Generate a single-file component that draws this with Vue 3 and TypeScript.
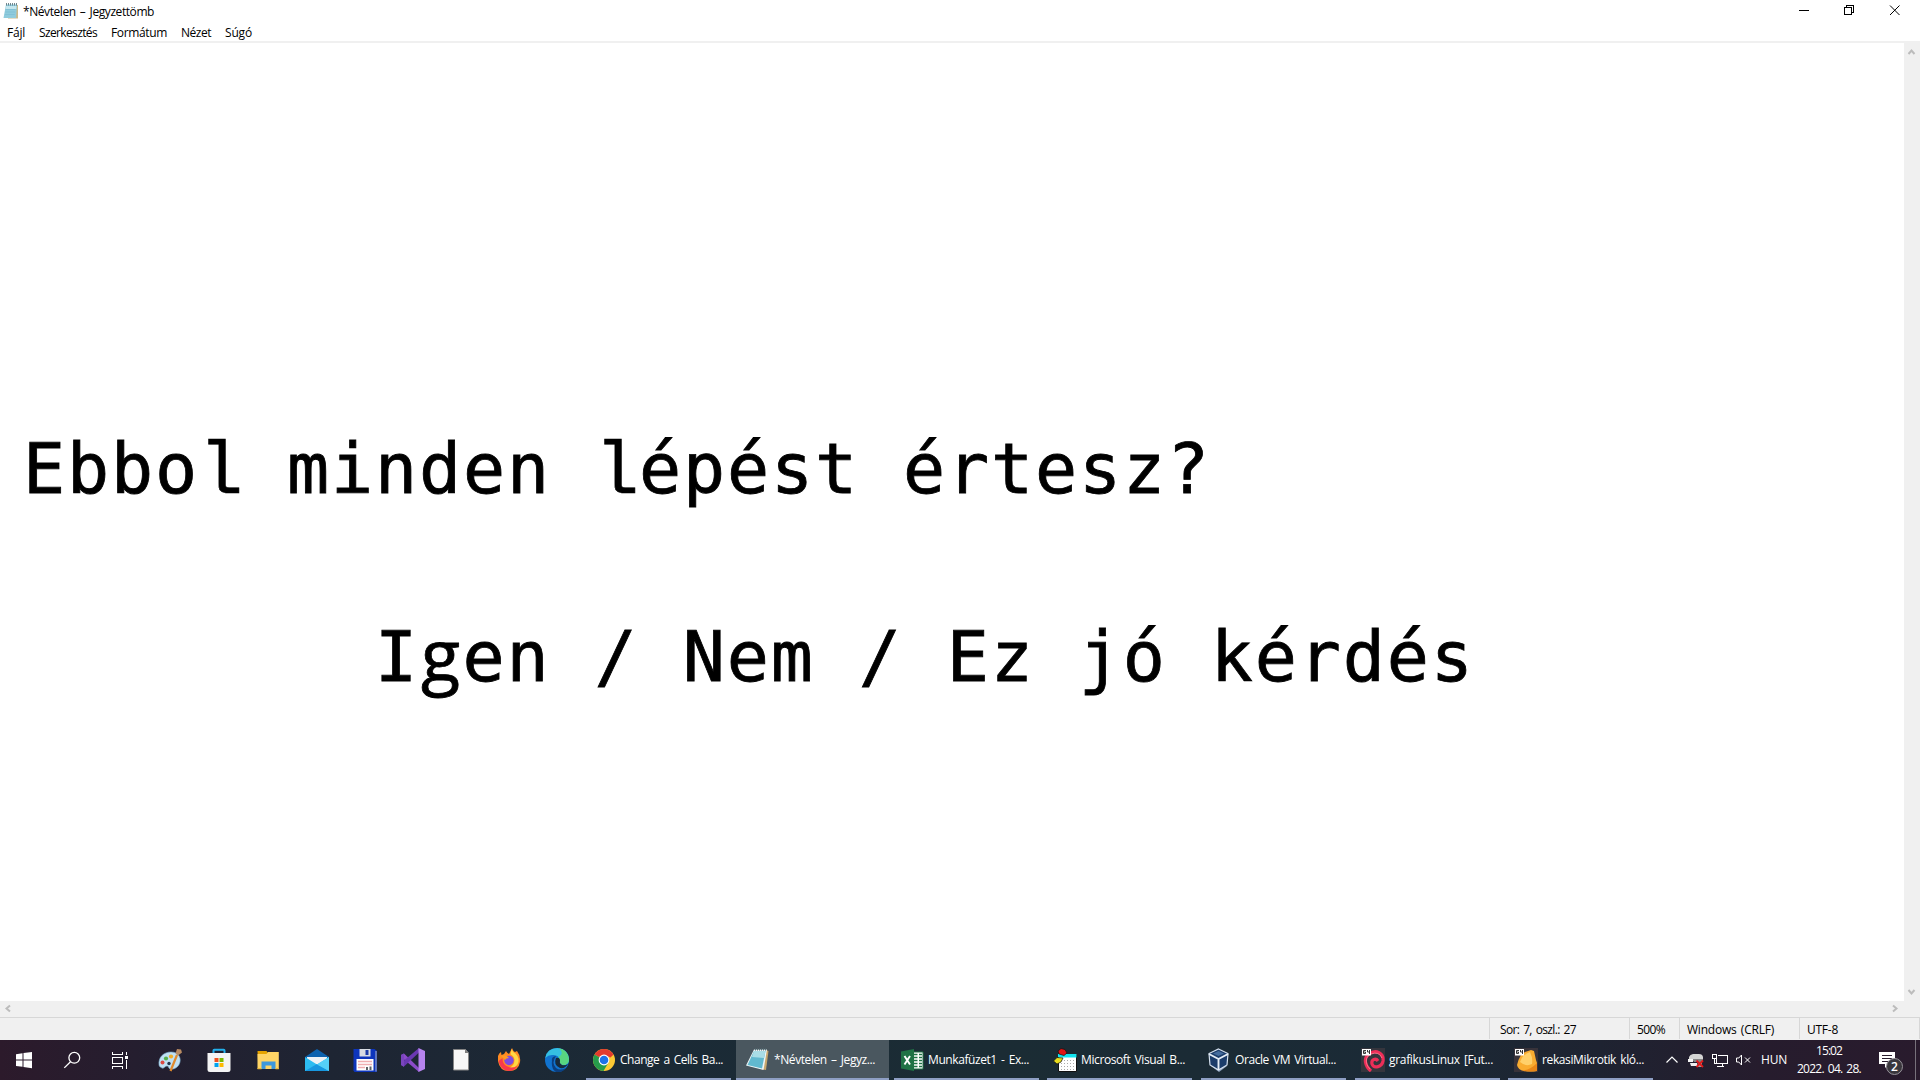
<script setup lang="ts">
interface Fitted {
  text: string
  width: number
}

interface Task extends Fitted {
  icon: string
  active?: boolean
}

const menu: Fitted[] = [
  { text: 'Fájl', width: 18 },
  { text: 'Szerkesztés', width: 58 },
  { text: 'Formátum', width: 56 },
  { text: 'Nézet', width: 30 },
  { text: 'Súgó', width: 27 },
]

const pinned = ['paint', 'store', 'explorer', 'mail', 'floppy', 'vs', 'file', 'firefox', 'edge']

const tasks: Task[] = [
  { icon: 'chrome', text: 'Change a Cells Ba...', width: 103 },
  { icon: 'notepad', text: '*Névtelen – Jegyz...', width: 101, active: true },
  { icon: 'excel', text: 'Munkafüzet1 - Ex...', width: 101 },
  { icon: 'vba', text: 'Microsoft Visual B...', width: 104 },
  { icon: 'vbox', text: 'Oracle VM Virtual...', width: 101 },
  { icon: 'debian', text: 'grafikusLinux [Fut...', width: 104 },
  { icon: 'mikrotik', text: 'rekasiMikrotik kló...', width: 102 },
]

/* Spreads the letters of a label so that it takes the given width. */
const vFit = {
  mounted(el: HTMLElement, binding: { value: number }) {
    const natural = el.getBoundingClientRect().width
    const count = (el.textContent ?? '').length
    el.style.letterSpacing = `${(binding.value - natural) / count}px`
  },
}
</script>

<template>
  <div class="screen">
    <header class="title-bar">
      <svg class="app-icon" width="16" height="17" viewBox="0 0 16 17">
        <path d="M4 2h11v13.500H5z" fill="#c9b98c" />
        <path d="M3 1.500h11L13 15H.5z" fill="#8fcbdc" />
        <path d="M3 3h10.500l-.3 3H2.500z" fill="#c4e6ee" />
        <path d="M2.500 6.500h10M2.200 9h10M1.800 11.500h10" stroke="#7dbdd2" stroke-width=".7" />
        <path d="M3.500 0v2.500M5.500 0v2.500M7.500 0v2.500M9.500 0v2.500M11.500 0v2.500M13.500 0v2.500" stroke="#526b74" stroke-width=".8" />
      </svg>
      <span class="title"><span v-fit="131">*Névtelen – Jegyzettömb</span></span>
      <svg class="win-buttons" width="138" height="20" viewBox="0 0 138 20" fill="none" stroke="#000" shape-rendering="crispEdges">
        <path d="M17 10.500h10" />
        <path d="M62.500 7.500h7v7h-7zM64.500 7.500v-2h7v7h-2" />
        <path d="M108 5.500l9.500 9.500M117.500 5.500l-9.500 9.500" shape-rendering="auto" />
      </svg>
    </header>
    <nav class="menu">
      <span v-for="m in menu" :key="m.text" class="menu-item" :style="{ width: m.width + 'px' }"><span v-fit="m.width">{{ m.text }}</span></span>
    </nav>

    <main class="editor">
      <div class="page">
        <p class="line first">Ebbo<span class="ell">l</span> minden <span class="ell">l</span>épést értesz?</p>
        <p class="line second">I<span class="gee">g</span>en / Nem / Ez jó kérdés</p>
      </div>
      <div class="v-scroll">
        <svg width="16" height="16" viewBox="0 0 16 16"><path d="M4.500 11l3-3.500 3 3.500" /></svg>
        <svg width="16" height="16" viewBox="0 0 16 16"><path d="M4.500 5l3 3.500 3-3.500" /></svg>
      </div>
    </main>
    <div class="h-scroll">
      <svg width="16" height="16" viewBox="0 0 16 16"><path d="M10 4.500l-3.500 3 3.500 3" /></svg>
      <svg width="16" height="16" viewBox="0 0 16 16"><path d="M6 4.500l3.500 3-3.500 3" /></svg>
    </div>

    <footer class="status">
      <div class="cell pos"><span v-fit="76">Sor: 7, oszl.: 27</span></div>
      <div class="cell zoom"><span v-fit="28">500%</span></div>
      <div class="cell eol"><span v-fit="87">Windows (CRLF)</span></div>
      <div class="cell enc"><span v-fit="31">UTF-8</span></div>
    </footer>

    <div class="taskbar">
      <div class="system">
        <svg width="48" height="40" viewBox="0 0 48 40" fill="#fff">
          <path d="M16 14.200l6.500-.9v6.200H16zM23.500 13.100l8.500-1.200v7.600h-8.500zM16 20.500h6.500v6.300l-6.500-.9zM23.500 20.500H32v7.700l-8.500-1.200z" />
        </svg>
        <svg width="48" height="40" viewBox="0 0 48 40" fill="none" stroke="#fff" stroke-width="1.300">
          <circle cx="26.300" cy="17.800" r="5.400" />
          <path d="M22.500 21.700l-6.200 6.200" />
        </svg>
        <svg width="48" height="40" viewBox="0 0 48 40" fill="none" stroke="#fff" shape-rendering="crispEdges">
          <path d="M16.500 12v2.500h10V12M16.500 17.500h10v6h-10zM16.500 28.500v-2.500h10v2.500M30.500 12v3M30.500 20v8.500" />
          <path d="M29 16h3v3h-3z" fill="#fff" stroke="none" />
        </svg>
      </div>

      <div class="pinned">
        <div v-for="p in pinned" :key="p" class="pin">
          <svg width="24" height="24" viewBox="0 0 24 24">
            <template v-if="p === 'paint'">
              <path d="M1 17C0 9 6 4 13 4c7 0 10 5 9 10s-6 8-10 7c-2-1-1-3-3-3s-3 3-5 2-2.700-1.500-3-3z" fill="#bfe0f3" stroke="#79a9ca" stroke-width=".6" />
              <circle cx="4.500" cy="14.500" r="2" fill="#dc4943" />
              <circle cx="8" cy="10.500" r="2.100" fill="#55b14d" />
              <circle cx="13" cy="8.500" r="2.100" fill="#f0ad28" />
              <circle cx="11" cy="15.500" r="1.700" fill="#23354b" />
              <path d="M19 7l-6.500 16" stroke="#e08a2d" stroke-width="2.200" />
              <path d="M17.500 5.500L20 7.500l4-3-1-3-4-.5z" fill="#b98b62" />
            </template>
            <template v-else-if="p === 'store'">
              <path d="M6.500 6V2.500q0-.8.8-.8h9.400q.8 0 .8.8V6" fill="none" stroke="#23b0ec" stroke-width="2" />
              <path d="M.5 5h23v16.500q0 2.500-2.500 2.500H3Q.5 24 .5 21.500z" fill="#f4f4f4" />
              <path d="M7.500 10h4v4h-4z" fill="#f0511f" />
              <path d="M12.500 10h4v4h-4z" fill="#7cba00" />
              <path d="M7.500 15h4v4h-4z" fill="#00a3ee" />
              <path d="M12.500 15h4v4h-4z" fill="#fdb900" />
            </template>
            <template v-else-if="p === 'explorer'">
              <path d="M1.500 3h9l1.500 2h10v8h-20z" fill="#e6a400" />
              <path d="M1.500 6h9l1.500-2h10.800v17H1.500z" fill="#ffd566" />
              <path d="M5.500 21v-7.500h14V21h-4v-3.500h-6V21z" fill="#3d98dc" />
              <path d="M1.500 20h4v1.200h-4zM19.500 20h3.300v1.200h-3.300z" fill="#e9b73e" />
            </template>
            <template v-else-if="p === 'mail'">
              <path d="M0 9l12-8 12 8v5H0z" fill="#0d62ae" />
              <path d="M2 9h20v6l-10 3L2 15z" fill="#eef2f5" />
              <path d="M0 9l12 7.500L24 9v14H0z" fill="#2cbcf1" />
              <path d="M0 23l12-7 12 7z" fill="#1797e0" />
              <path d="M24 9v14L12 16.500z" fill="#55d0f7" />
            </template>
            <template v-else-if="p === 'floppy'">
              <path d="M.5 1h21L24 3v21H1.500L.5 22.500z" fill="#0d35bb" />
              <path d="M23 3v20.500" stroke="#b0b5bd" />
              <path d="M6.500 1h11v7.500h-11z" fill="#d7dbe2" />
              <path d="M12.500 2h3v5h-3z" fill="#1a3ca8" />
              <path d="M3.500 11h17v11.500h-17z" fill="#fff" />
              <path d="M5 13.500h14M5 16.500h14M5 19.500h7" stroke="#efadb0" stroke-width="1.300" />
              <path d="M13 19h2v3h-2zM16.500 18.500h2v3.500h-2z" fill="#5b6065" />
            </template>
            <template v-else-if="p === 'vs'">
              <path d="M0 7l3-1.500L18 20v4L0 9z" fill="#8c4bc9" />
              <path d="M0 17l3 1.500L18 4.500V0L0 15z" fill="#6a38b2" />
              <path d="M0 7l3-1.500V19L0 17z" fill="#7a45bd" />
              <path d="M17.500 0L24 3v18l-6.500 3z" fill="#b683ee" />
            </template>
            <template v-else-if="p === 'file'">
              <path d="M4.500 1.500h12l3 3.500v17h-15z" fill="#f7f7f7" stroke="#858585" />
              <path d="M16 1.500V5h3.500z" fill="#7c7c7c" />
            </template>
            <template v-else-if="p === 'firefox'">
              <path d="M1 8q1-3 3-4l.5 3L7 6l2-3q1 2 3 3l3-6q1 3 3 4l2-1q4 5 3 11-1.500 9-11 9T1 13z" fill="#ff8a21" />
              <path d="M14.500 1q1 3 4 4.500 5 5 2 11-4 5-9 3 6-1 6-8-1-4-4-5z" fill="#ffd843" />
              <path d="M1.500 13q2 9 10 10 6 0 9-5-6 3-11 0-4-2-4-8z" fill="#f9394b" />
              <circle cx="12" cy="12.500" r="4.700" fill="#7d4be0" />
              <path d="M4 8q5-2 8 2-3 0-4 2-2-3-4-4z" fill="#ff9b23" />
            </template>
            <template v-else>
              <circle cx="12" cy="12" r="12" fill="#1173cf" />
              <path d="M.3 10Q2 0 12.500 0 23 1 24 11q0 6-6 6-4-1-3-4-1-7-8-6Q3 7 .3 10z" fill="#35bfe2" />
              <path d="M14 .2Q23 2 24 11q0 6-6 6-4-1-3-4 0-2-1.500-4Q20 6 14 .2z" fill="#58d580" />
              <path d="M7 13q-1-4 4-5-5 7 0 12 4 3 10 0-4 5-10 4-5-3-4-11z" fill="#0b3f80" />
              <path d="M11 10q4-1 4 3-1 2 2 4 3 1 6-1-3 5-8 4-7-3-4-10z" fill="#182b3c" />
            </template>
          </svg>
        </div>
      </div>

      <div class="tasks">
        <div v-for="t in tasks" :key="t.icon" class="task" :class="{ active: t.active }">
          <svg width="24" height="24" viewBox="0 0 24 24">
            <template v-if="t.icon === 'chrome'">
              <circle cx="12" cy="12" r="11" fill="#fcc934" />
              <path d="M12 12L2.500 6.500A11 11 0 0 1 21.500 6.500z" fill="#e23b2e" />
              <path d="M12 12L2.500 6.500A11 11 0 0 0 11.500 23l5-8.500z" fill="#269c4b" />
              <path d="M12 6.500h9.500l-3 3z" fill="#e23b2e" />
              <circle cx="12" cy="12" r="5.400" fill="#fff" />
              <circle cx="12" cy="12" r="4.300" fill="#1d72e8" />
            </template>
            <template v-else-if="t.icon === 'notepad'">
              <path d="M20 2l2.500 1-2.500 19-5-1z" fill="#c8a76d" />
              <path d="M8 1.500h13L17.500 22 0 17.500z" fill="#eef6f7" />
              <path d="M8 3h11.500L16 20.500 1.500 17z" fill="#61b9cf" />
              <path d="M8 3h11.500l-1.500 7-12-1z" fill="#a9dde6" />
              <path d="M9 1.500h12" stroke="#526d74" stroke-dasharray="1 1" stroke-width="2" />
            </template>
            <template v-else-if="t.icon === 'excel'">
              <path d="M13 4h10v17H13z" fill="#fff" stroke="#207245" />
              <path d="M14 6.500h3.500M19 6.500h3M14 9.500h3.500M19 9.500h3M14 12.500h3.500M19 12.500h3M14 15.500h3.500M19 15.500h3M14 18.500h3.500M19 18.500h3" stroke="#207245" stroke-width="1.700" />
              <path d="M1 3.500L14 1v22L1 20.500z" fill="#207245" />
              <path d="M4.500 8l5.500 8.500M10 8l-5.500 8.500" stroke="#fff" stroke-width="1.900" />
            </template>
            <template v-else-if="t.icon === 'vba'">
              <path d="M5.500 6.500h18v17h-18z" fill="#fff" stroke="#111" />
              <path d="M5 6h18.500v3.500H5z" fill="#12e4ef" />
              <path d="M8 12.500h14M8 15.500h14M8 18.500h14M8 21.500h14" stroke="#aaa" stroke-dasharray="1 2" />
              <path d="M5 3l3-2.500 4 1L14 5l-3 2.500L6 6z" fill="#e01414" stroke="#111" stroke-width=".7" />
              <path d="M.5 13L4 9.500l6 .5-2 4-4 2z" fill="#e7db1d" stroke="#111" stroke-width=".7" />
            </template>
            <template v-else-if="t.icon === 'vbox'">
              <path d="M4 18l8 6 8-6z" fill="#8da3be" />
              <path d="M11.500 1L21 5.500 20 17l-8.500 5L3 17 2 5.500z" fill="#1b3c6a" stroke="#d5e0ee" stroke-width="1.200" />
              <path d="M2 6l9.500 5L21 6M11.500 11v11" fill="none" stroke="#e4edf7" stroke-width="1.900" />
              <path d="M6 5.500l5.500-2.500L17 5.500 11.500 8z" fill="#446c9d" />
            </template>
            <template v-else-if="t.icon === 'debian'">
              <path d="M0 0h24v24H0z" fill="#35353d" />
              <path d="M10 23C4 18 2 10 8 6c7-5 15-1 14 7-1 6-9 8-11 3-1-5 4-6 6-3" fill="none" stroke="#ed2e58" stroke-width="3.200" />
              <path d="M9 21C3 15 5 8 10 6q8-3 11 4" fill="none" stroke="#ff8297" stroke-width=".8" />
            </template>
            <template v-else>
              <path d="M0 0h24v24H0z" fill="#38333a" />
              <path d="M3 17q1-5 4-10l4-3 6-2 3 1 2 9 1 3v8q-6 1-13 0-6-1-7-6z" fill="#f9ac30" />
              <path d="M6 14q3-8 10-10 3 6 2 12-6 3-12-2z" fill="#ffd06a" />
              <path d="M7 22.500q9 0 16-7.500v8q-8 1-16-.5z" fill="#e98717" />
            </template>
            <g v-if="t.icon === 'debian' || t.icon === 'mikrotik'">
              <path d="M1 1h9v6.500H1z" fill="#fff" />
              <path d="M5 2.500H2.500v3h2V4h-2M6.500 2v2h2.500M8.500 2v4" fill="none" stroke="#222" stroke-width=".9" />
            </g>
          </svg>
          <span class="task-label"><span v-fit="t.width">{{ t.text }}</span></span>
        </div>
      </div>

      <div class="tray">
        <svg class="chevron" width="12" height="8" viewBox="0 0 12 8" fill="none" stroke="#fff" stroke-width="1.200"><path d="M.5 6.500L6 1l5.500 5.500" /></svg>
        <svg class="device" width="17" height="16" viewBox="0 0 17 16">
          <path d="M1 4q1-2.500 4-3h6q3.500 0 4 3v4H1z" fill="#d4d4d4" />
          <path d="M4 6h11v3H6z" fill="#858585" />
          <path d="M0 6h5v3H0z" fill="#f5f5f5" />
          <path d="M2 10h7v3H3z" fill="#efefef" />
          <path d="M10 9h4v5h-5z" fill="#9b9b9b" />
          <path d="M8.500 7.500l6.500 6.500M15 7.500L8.500 14" stroke="#e01b1b" stroke-width="1.800" />
        </svg>
        <svg class="network" width="17" height="16" viewBox="0 0 17 16" fill="none" stroke="#fff" shape-rendering="crispEdges">
          <path d="M5.500 2.500h10v8h-11V6M.5 1.500h4v4h-4zM2.500 5.500v5h2M10.500 10.500v3M5 13.500h7" />
        </svg>
        <svg class="volume" width="15" height="14" viewBox="0 0 15 14" fill="none" stroke="#fff">
          <path d="M.5 5h2.300L5.500 2v10L2.800 9H.5z" />
          <path d="M9 4.500l5 5M14 4.500l-5 5" />
        </svg>
        <span class="lang"><span v-fit="26">HUN</span></span>
        <div class="clock">
          <span v-fit="26">15:02</span>
          <span v-fit="64">2022. 04. 28.</span>
        </div>
        <div class="notes">
          <svg width="16" height="16" viewBox="0 0 16 16">
            <path d="M0 0h16v12h-6l-4 4v-4H0z" fill="#fff" />
            <path d="M3 3.500h10M3 6.500h10M3 9.500h7" stroke="#281c2d" />
          </svg>
          <span class="badge">2</span>
        </div>
        <i class="peek"></i>
      </div>
    </div>
  </div>
</template>

<style>
body {
  margin: 0;
  overflow: hidden;
}
</style>

<style scoped>
.screen {
  display: flex;
  flex-direction: column;
  width: 1920px;
  height: 1080px;
  overflow: hidden;
  background: #fff;
  color: #000;
  font: 12px/16px "Open Sans", "Noto Sans", sans-serif;
  white-space: nowrap;
  word-spacing: 1.500px;
}
svg {
  display: block;
  flex: none;
}
.title-bar {
  display: flex;
  height: 24px;
}
.app-icon {
  margin: 3px 4px 0 3px;
}
.title {
  flex: 1;
  margin-top: 4px;
}
.menu {
  box-sizing: border-box;
  display: flex;
  gap: 14px;
  height: 19px;
  padding: 1px 0 0 7px;
  border-bottom: 2px solid #f0f0f0;
}
.menu-item {
  height: 16px;
}
.editor {
  display: flex;
  height: 958px;
}
.page {
  flex: 1;
  padding: 379px 0 0 23px;
}
.line {
  margin: 0;
  height: 94px;
  font: 70px/94px "DejaVu Sans Mono", monospace;
  letter-spacing: 1.860px;
  word-spacing: 0;
  -webkit-text-stroke: 0.800px #000;
}
.second {
  margin-top: 94px;
  padding-left: 352px;
}
.ell {
  font: 73.300px/0 "Liberation Mono", monospace;
  letter-spacing: 0;
  -webkit-text-stroke: 0.600px #000;
}
.gee {
  padding-left: 2px;
  font: 72px/0 "Open Sans", sans-serif;
  letter-spacing: 2.500px;
}
.v-scroll,
.h-scroll {
  display: flex;
  justify-content: space-between;
  background: #f0f0f0;
}
.v-scroll {
  flex-direction: column;
  width: 16px;
}
.h-scroll {
  height: 16px;
  padding-right: 17px;
}
.v-scroll path,
.h-scroll path {
  fill: none;
  stroke: #bcbcbc;
  stroke-width: 2;
}
.status {
  display: flex;
  justify-content: flex-end;
  height: 22px;
  border-top: 1px solid #d7d7d7;
  background: #f0f0f0;
}
.cell {
  box-sizing: border-box;
  height: 21px;
  padding-top: 4px;
  border-left: 1px solid #d7d7d7;
}
.pos {
  width: 140px;
  padding-left: 10px;
}
.zoom {
  width: 50px;
  padding-left: 7px;
}
.eol {
  width: 120px;
  padding-left: 7px;
}
.enc {
  width: 121px;
  padding-left: 7px;
  border-right: 1px solid #d7d7d7;
}
.taskbar {
  display: flex;
  height: 40px;
  color: #fff;
  background: linear-gradient(90deg, #2c1a2b 0, #231f30 170px, #1e2533 330px, #1b2a36 620px, #1b2c34 1000px, #1b2a36 1400px, #1e2331 1600px, #261c2d 1760px, #291b2d 1920px);
}
.system {
  display: flex;
  width: 145px;
}
.pinned {
  display: flex;
  width: 436px;
}
.pin {
  display: flex;
  justify-content: center;
  align-items: center;
  width: 48px;
}
.pin:nth-child(-n + 4) {
  width: 49px;
}
.tasks {
  display: flex;
  width: 1072px;
}
.task {
  box-sizing: border-box;
  display: flex;
  width: 145px;
  height: 40px;
  margin-left: 8px;
  padding: 8px 0 0 6px;
  border-bottom: 2px solid #8e9fc4;
}
.task:nth-child(-n + 3) {
  margin-left: 5px;
}
.task:nth-child(5),
.task:nth-child(6) {
  margin-left: 9px;
}
.task.active {
  width: 153px;
  padding-left: 10px;
  background: #4a575f;
}
.task-label {
  margin: 4px 0 0 4px;
}
.tray {
  display: flex;
  flex: 1;
}
.chevron {
  margin: 16px 0 0 13px;
}
.device {
  margin: 13px 0 0 10px;
}
.network {
  margin: 13px 0 0 7px;
}
.volume {
  margin: 13px 0 0 7px;
}
.lang {
  width: 26px;
  margin: 12px 0 0 10px;
}
.clock {
  display: flex;
  flex-direction: column;
  align-items: center;
  gap: 2px;
  width: 64px;
  margin: 3px 0 0 10px;
}
.notes {
  position: relative;
  margin: 12px 0 0 18px;
}
.badge {
  position: absolute;
  left: 7px;
  top: 6px;
  box-sizing: border-box;
  width: 17px;
  height: 17px;
  border: 1px solid #96929a;
  border-radius: 50%;
  background: #39363c;
  font-size: 12px;
  font-weight: 600;
  line-height: 15px;
  text-align: center;
}
.peek {
  width: 1px;
  margin-left: 20px;
  background: #77717b;
}
</style>
